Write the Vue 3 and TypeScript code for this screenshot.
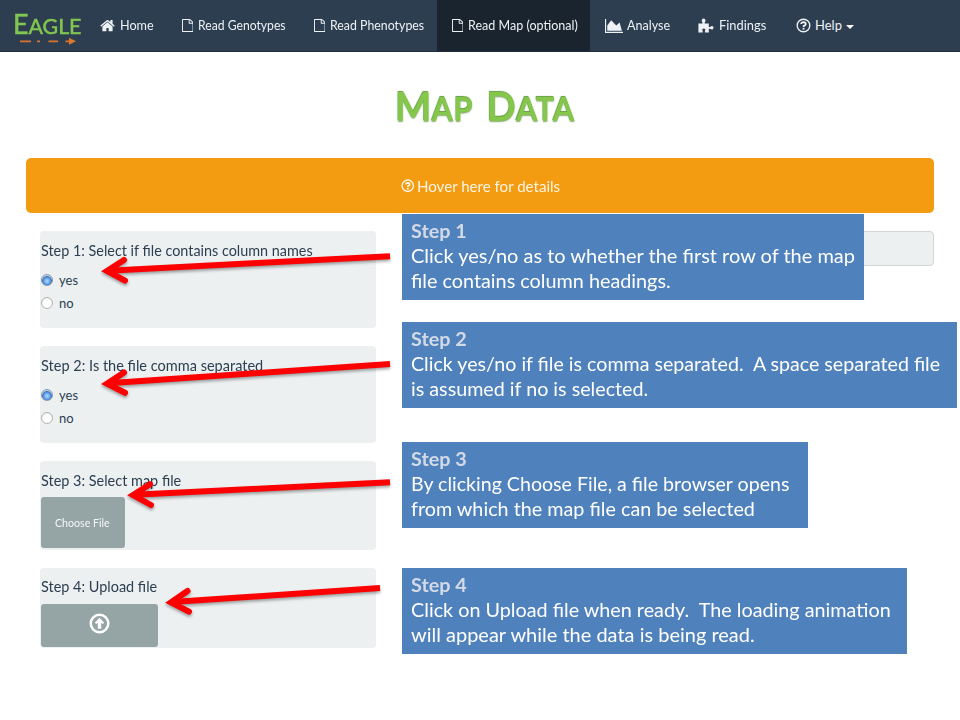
<script setup lang="ts">
import { ref } from 'vue'

interface NavItem {
  label: string
  icon: 'home' | 'file' | 'chart' | 'puzzle' | 'help'
  width: number
  iconSlot: number
  textWidth: number
  active?: boolean
  caret?: boolean
}

interface Line {
  text: string
  width: number
}

interface Callout {
  id: number
  lines: Line[]
}

const navItems: NavItem[] = [
  { label: 'Home', icon: 'home', width: 82, iconSlot: 20, textWidth: 34 },
  { label: 'Read Genotypes', icon: 'file', width: 132, iconSlot: 16, textWidth: 88 },
  { label: 'Read Phenotypes', icon: 'file', width: 138, iconSlot: 16, textWidth: 94 },
  { label: 'Read Map (optional)', icon: 'file', width: 153, iconSlot: 16, textWidth: 110, active: true },
  { label: 'Analyse', icon: 'chart', width: 93, iconSlot: 22, textWidth: 43.5 },
  { label: 'Findings', icon: 'puzzle', width: 98, iconSlot: 21.5, textWidth: 47.5 },
  { label: 'Help', icon: 'help', width: 86, iconSlot: 19.5, textWidth: 27, caret: true },
]

const radioSteps = [
  { id: 1, title: 'Step 1: Select if file contains column names', width: 271.5 },
  { id: 2, title: 'Step 2: Is the file comma separated', width: 222.5 },
]

const answers = ref<Record<number, string>>({ 1: 'yes', 2: 'yes' })

const callouts: Callout[] = [
  {
    id: 1,
    lines: [
      { text: 'Click yes/no as to whether the first row of the map', width: 444 },
      { text: 'file contains column headings.', width: 260 },
    ],
  },
  {
    id: 2,
    lines: [
      { text: 'Click yes/no if file is comma separated.\u00a0 A space separated file', width: 529 },
      { text: 'is assumed if no is selected.', width: 237.5 },
    ],
  },
  {
    id: 3,
    lines: [
      { text: 'By clicking Choose File, a file browser opens', width: 378 },
      { text: 'from which the map file can be selected', width: 344 },
    ],
  },
  {
    id: 4,
    lines: [
      { text: 'Click on Upload file when ready.\u00a0 The loading animation', width: 480 },
      { text: 'will appear while the data is being read.', width: 343.5 },
    ],
  },
]

const arrows = [
  { shaft: 'M390 256.2L108 270.7', head: 'M124 260L107 271L125 280.7' },
  { shaft: 'M390 364L108 383.2', head: 'M124 372.5L107 383.7L125 392.8' },
  { shaft: 'M390 482.3L134 494.7', head: 'M150 484.2L133 495L151 505' },
  { shaft: 'M380 588L172 602', head: 'M187.5 591L171 602.4L189 611.7' },
]

// Stretches a line of text horizontally to the requested width.
const vFit = {
  mounted(el: HTMLElement, binding: { value: number }) {
    const natural = el.offsetWidth
    if (natural > 0) el.style.transform = `scaleX(${binding.value / natural})`
  },
}
</script>

<template>
  <div class="page">
    <nav class="navbar">
      <div class="brand">
        <div class="brand-name"><span v-fit="68.5" class="fit"><span class="big">E</span>AGLE</span></div>
        <svg class="brand-line" width="58" height="8" viewBox="0 0 58 8">
          <path d="M1 4.3H12M18 4.3H21M29.5 4.3H39M46.5 4.3H50" stroke="#d9752f" stroke-width="1.7" />
          <path d="M50 .8L57 4.2L50 7.8Z" fill="#e3762b" />
        </svg>
      </div>
      <a
        v-for="item in navItems"
        :key="item.label"
        class="nav-item"
        :class="{ active: item.active }"
        :style="{ width: item.width + 'px' }"
      >
        <span class="nav-icon" :style="{ width: item.iconSlot + 'px' }">
          <svg v-if="item.icon === 'home'" width="15" height="15" viewBox="50 130 1692 1500">
            <path fill="currentColor" d="M1472 992v480q0 26-19 45t-45 19h-384v-384h-256v384h-384q-26 0-45-19t-19-45v-480q0-1 .5-3t.5-3l575-474 575 474q1 2 1 6zm223-69l-62 74q-8 9-21 11h-3q-13 0-21-7l-692-577-692 577q-12 8-24 7-13-2-21-11l-62-74q-8-10-7-23.5t11-21.5l719-599q32-26 76-26t76 26l244 204v-195q0-14 9-23t23-9h192q14 0 23 9t9 23v408l219 182q10 8 11 21.5t-7 23.5z" />
          </svg>
          <svg v-else-if="item.icon === 'file'" width="11.5" height="13" viewBox="128 0 1536 1792" preserveAspectRatio="none">
            <path fill="currentColor" d="M1596 380q28 28 48 76t20 88v1152q0 40-28 68t-68 28h-1344q-40 0-68-28t-28-68v-1600q0-40 28-68t68-28h896q40 0 88 20t76 48zm-444-244v376h376q-10-29-22-41l-313-313q-12-12-41-22zm384 1528v-1024h-416q-40 0-68-28t-28-68v-416h-768v1536h1280z" />
          </svg>
          <svg v-else-if="item.icon === 'chart'" width="18" height="14" viewBox="0 128 2048 1536" preserveAspectRatio="none">
            <path fill="currentColor" d="M2048 1536v128h-2048v-1536h128v1408h1920zm-384-1024l256 896h-1664v-576l448-576 576 576z" />
          </svg>
          <svg v-else-if="item.icon === 'puzzle'" width="16" height="15" viewBox="0 0 16 15">
            <path fill="currentColor" d="M.4 5.4H4.5V4.3Q3.7 3.6 3.7 2.4Q3.9.5 5.6.5Q7.3.5 7.5 2.4Q7.5 3.6 6.7 4.3V5.4H10.8V9H12.2Q12.9 8 14.1 8Q15.5 8.2 15.5 9.8Q15.5 11.4 14.1 11.6Q12.9 11.6 12.2 10.8H10.8V14.5H6.9V12.8Q7.5 12.2 7.4 11.4Q7 10.5 5.8 10.5Q4.6 10.5 4.2 11.4Q4.1 12.2 4.7 12.8V14.5H.4Z" />
          </svg>
          <svg v-else width="15" height="15" viewBox="0 0 15 15" fill="none" stroke="currentColor">
            <circle cx="7.5" cy="7.5" r="6.3" stroke-width="1.4" />
            <path d="M5.2 6Q5.4 4.2 7.5 4.2Q9.7 4.3 9.7 6Q9.7 7 8.4 7.6Q7.5 8 7.5 9" stroke-width="1.8" />
            <path d="M7.5 9.9V11.6" stroke-width="1.9" />
          </svg>
        </span>
        <span v-fit="item.textWidth" class="fit nav-label">{{ item.label }}</span>
        <i v-if="item.caret" class="caret"></i>
      </a>
    </nav>

    <header class="title">
      <h1 v-fit="180" class="fit"><span>M</span><small>AP</small> <span>D</span><small>ATA</small></h1>
    </header>

    <div class="banner">
      <svg width="13.5" height="13.5" viewBox="0 0 15 15" fill="none" stroke="currentColor">
        <circle cx="7.5" cy="7.5" r="6.3" stroke-width="1.6" />
        <path d="M5.2 6Q5.4 4.2 7.5 4.2Q9.7 4.3 9.7 6Q9.7 7 8.4 7.6Q7.5 8 7.5 9" stroke-width="1.9" />
        <path d="M7.5 9.9V11.7" stroke-width="2" />
      </svg>
      <div class="banner-text"><span v-fit="143" class="fit">Hover here for details</span></div>
    </div>

    <main class="content">
      <div class="steps">
        <section v-for="step in radioSteps" :key="step.id" class="card card-radio">
          <h2><span v-fit="step.width" class="fit">{{ step.title }}</span></h2>
          <label v-for="option in ['yes', 'no']" :key="option" class="option">
            <input v-model="answers[step.id]" type="radio" :name="'step' + step.id" :value="option" />
            <span>{{ option }}</span>
          </label>
        </section>
        <section class="card card-choose">
          <h2><span v-fit="140" class="fit">Step 3: Select map file</span></h2>
          <button class="btn choose"><span v-fit="55" class="fit">Choose File</span></button>
        </section>
        <section class="card card-upload">
          <h2><span v-fit="116.5" class="fit">Step 4: Upload file</span></h2>
          <button class="btn upload" aria-label="Upload file">
            <svg width="21" height="21" viewBox="0 0 21 21">
              <circle cx="10.5" cy="10.5" r="8.8" fill="none" stroke="#fff" stroke-width="2.5" />
              <path d="M10.5 4.7L15.2 9.8L13.7 11.1L12.2 10.1V15.8H8.8V10.1L7.3 11.1L5.8 9.8Z" fill="#fff" />
            </svg>
          </button>
        </section>
      </div>
      <div class="output"></div>
    </main>

    <svg class="arrows" width="960" height="720" viewBox="0 0 960 720">
      <g v-for="(arrow, i) in arrows" :key="i" fill="none" stroke="#fe0000" stroke-width="6">
        <path :d="arrow.shaft" />
        <path :d="arrow.head" stroke-linecap="round" stroke-linejoin="miter" />
      </g>
    </svg>

    <aside v-for="box in callouts" :key="box.id" class="callout" :class="'callout-' + box.id">
      <strong><span v-fit="56" class="fit">Step {{ box.id }}</span></strong>
      <p v-for="line in box.lines" :key="line.text"><span v-fit="line.width" class="fit">{{ line.text }}</span></p>
    </aside>
  </div>
</template>

<style>
body {
  margin: 0;
  background: #fff;
}
</style>

<style scoped>
.page {
  position: relative;
  width: 960px;
  height: 720px;
  overflow: hidden;
  background: #fff;
  color: #2c3e50;
  font-family: Lato, "Liberation Sans", sans-serif;
}
.page * {
  box-sizing: border-box;
}
.fit {
  display: inline-block;
  white-space: nowrap;
  transform-origin: 0 50%;
}
.navbar {
  display: flex;
  height: 52px;
  background: #2c3e50;
  border-bottom: 1px solid #202d3a;
  color: #fff;
}
.brand {
  width: 85px;
  padding: 8px 0 0 13px;
  color: #82c650;
}
.brand-name {
  height: 29px;
  line-height: 32px;
  font-size: 21.5px;
  -webkit-text-stroke: 0.5px #82c650;
}
.big {
  font-size: 27px;
}
.brand-line {
  display: block;
  margin-left: 6px;
}
.nav-item {
  display: flex;
  align-items: center;
  height: 51px;
  padding-left: 14.5px;
  font-size: 13px;
  color: #eef2f5;
}
.nav-item.active {
  background: #1a242f;
}
.nav-icon {
  display: flex;
  flex: none;
  align-items: center;
}
.nav-label {
  padding-bottom: 1px;
}
.caret {
  margin: 3px 0 0 4px;
  border: 4px solid transparent;
  border-top-color: #fff;
  border-bottom: 0;
}
.title {
  height: 106px;
  padding: 29px 0 0 395px;
}
h1 {
  margin: 0;
  font-size: 41px;
  line-height: 50px;
  font-weight: 700;
  color: #84c74a;
  word-spacing: 4px;
  text-shadow: -0.6px -0.6px 0.8px #659f42, 0 1px 1.5px rgba(90, 130, 65, 0.7);
}
h1 small {
  font-size: 33px;
  letter-spacing: 0.5px;
}
.banner {
  display: flex;
  align-items: center;
  gap: 2px;
  height: 55px;
  margin: 0 26px;
  padding-left: 375px;
  border-radius: 5px;
  background: #f39c12;
  color: #fff4e2;
  font-size: 15.5px;
}
.content {
  display: flex;
  gap: 26px;
  padding: 18px 26px 0 40px;
}
.steps {
  display: flex;
  flex-direction: column;
  gap: 18px;
  width: 336px;
}
.card {
  padding: 8px 0 0 1px;
  border-radius: 4px;
  background: #ecf0f1;
}
.card-radio {
  height: 97px;
}
.card-choose {
  height: 89px;
}
.card-upload {
  height: 80px;
}
h2 {
  height: 22px;
  margin: 0;
  font-size: 16px;
  line-height: 22px;
  font-weight: 400;
}
.card-radio h2 {
  margin-bottom: 7px;
}
.option {
  display: flex;
  align-items: center;
  gap: 6px;
  height: 23px;
  font-size: 13px;
}
.option input {
  appearance: none;
  width: 12px;
  height: 12px;
  margin: 0;
  border: 1px solid #b3b6b5;
  border-radius: 50%;
  background: radial-gradient(circle at 50% 60%, #fff 40%, #e4e4e0);
}
.option input:checked {
  border-color: #8597b0;
  background: radial-gradient(circle at 50% 60%, #9bcbfb 0 15%, #5a9be6 42%, #4274b8 58%, #c9d8e8 68%);
}
.btn {
  display: flex;
  align-items: center;
  justify-content: center;
  padding: 0;
  border: 0;
  border-radius: 3px;
  background: #95a5a6;
  color: #f5f7f7;
  font-family: inherit;
  font-size: 11px;
}
.choose {
  width: 84px;
  height: 51px;
  margin-top: 6px;
  padding-left: 1px;
}
.upload {
  width: 117px;
  height: 43px;
  margin-top: 7px;
  padding-bottom: 4px;
}
.card-upload {
  padding-top: 7px;
}
.output {
  flex: 1;
  height: 35px;
  border: 1px solid #d2d5d6;
  border-radius: 4px;
  background: #ecf0f1;
}
.arrows {
  position: absolute;
  top: 0;
  left: 0;
  filter: drop-shadow(0 2px 1.5px rgba(0, 0, 0, 0.35));
  pointer-events: none;
}
.callout {
  position: absolute;
  left: 402px;
  height: 86px;
  padding: 4px 0 0 9px;
  background: #4f81bd;
  color: #fff;
  font-size: 18.5px;
}
.callout strong {
  display: block;
  height: 26px;
  line-height: 26px;
  font-size: 18px;
  color: #d3dae5;
}
.callout p {
  height: 25px;
  margin: 0;
  line-height: 25px;
}
.callout-1 {
  top: 214px;
  width: 462px;
}
.callout-2 {
  top: 322px;
  width: 555px;
}
.callout-3 {
  top: 442px;
  width: 406px;
}
.callout-4 {
  top: 568px;
  width: 505px;
}
</style>
